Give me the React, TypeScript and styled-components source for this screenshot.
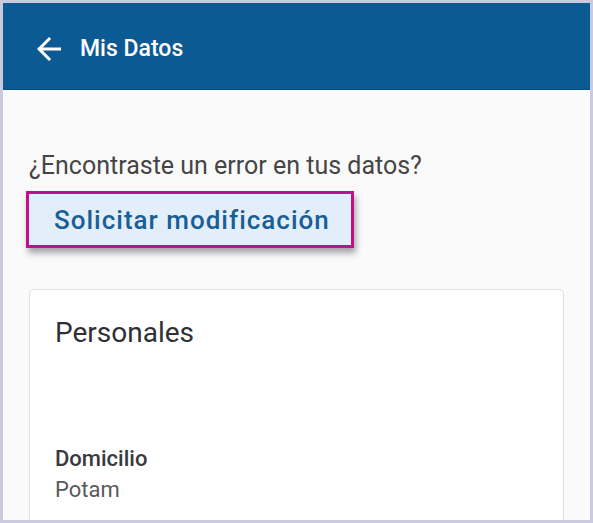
import React from 'react';
import styled, { createGlobalStyle } from 'styled-components';

const GlobalStyle = createGlobalStyle`
  html, body {
    margin: 0;
    padding: 0;
    background: #ffffff;
  }
  body {
    font-family: Roboto, "Liberation Sans", Arial, sans-serif;
  }
`;

const Frame = styled.div`
  box-sizing: border-box;
  width: 593px;
  height: 523px;
  border: 3px solid #c9cade;
  background: #fafafa;
  overflow: hidden;
  display: flex;
  flex-direction: column;
`;

const TopBar = styled.header`
  flex: 0 0 auto;
  height: 87px;
  background: #0b5a93;
  border-bottom: 1px solid #0a4f82;
  box-sizing: border-box;
  display: flex;
  align-items: center;
  padding-left: 28px;
  gap: 7px;
  color: #ffffff;
`;

const BackButton = styled.button`
  border: none;
  background: none;
  padding: 0;
  width: 36px;
  height: 36px;
  color: #ffffff;
  display: flex;
  align-items: center;
  justify-content: center;
  cursor: pointer;
  margin-top: 5px;
`;

const Title = styled.h1`
  margin: 5px 0 0 6px;
  font-size: 23px;
  font-weight: 500;
`;

const Body = styled.main`
  flex: 1;
  padding: 61px 26px 0 26px;
  display: flex;
  flex-direction: column;
  align-items: flex-start;
`;

const Question = styled.p`
  margin: 0;
  font-size: 25px;
  line-height: 30px;
  color: #454545;
`;

const ActionButton = styled.button`
  margin: 10px 0 0 -3px;
  box-sizing: border-box;
  height: 57px;
  padding: 0 21px 0 25px;
  border: 3px solid #c40f8c;
  background: #e2effa;
  color: #1a5e97;
  font-family: Roboto, "Liberation Sans", Arial, sans-serif;
  font-size: 26px;
  font-weight: 500;
  letter-spacing: 1px;
  box-shadow: 2px 5px 6px rgba(60, 60, 70, 0.45);
  cursor: pointer;
`;

const Card = styled.section`
  margin-top: 41px;
  align-self: stretch;
  flex: 1;
  background: #ffffff;
  border: 1px solid #dedfe8;
  border-bottom: none;
  border-radius: 5px 5px 0 0;
  padding: 25px 25px 0 25px;
`;

const CardTitle = styled.h2`
  margin: 0;
  font-size: 28px;
  font-weight: 400;
  line-height: 35px;
  color: #2f3035;
`;

const Field = styled.div`
  margin-top: 94px;
  display: flex;
  flex-direction: column;
  gap: 1px;
`;

const FieldLabel = styled.span`
  font-size: 22px;
  font-weight: 500;
  line-height: 30px;
  color: #3a3a3e;
`;

const FieldValue = styled.span`
  font-size: 22px;
  line-height: 30px;
  color: #5a5a5e;
`;

const ArrowBack = () => (
  <svg width="36" height="36" viewBox="0 0 24 24" fill="currentColor">
    <path d="M20 11H7.83l5.59-5.59L12 4l-8 8 8 8 1.41-1.41L7.83 13H20v-2z" />
  </svg>
);

export default function App() {
  return (
    <>
      <GlobalStyle />
      <Frame>
        <TopBar>
          <BackButton aria-label="Volver">
            <ArrowBack />
          </BackButton>
          <Title>Mis Datos</Title>
        </TopBar>
        <Body>
          <Question>¿Encontraste un error en tus datos?</Question>
          <ActionButton>Solicitar modificación</ActionButton>
          <Card>
            <CardTitle>Personales</CardTitle>
            <Field>
              <FieldLabel>Domicilio</FieldLabel>
              <FieldValue>Potam</FieldValue>
            </Field>
          </Card>
        </Body>
      </Frame>
    </>
  );
}
